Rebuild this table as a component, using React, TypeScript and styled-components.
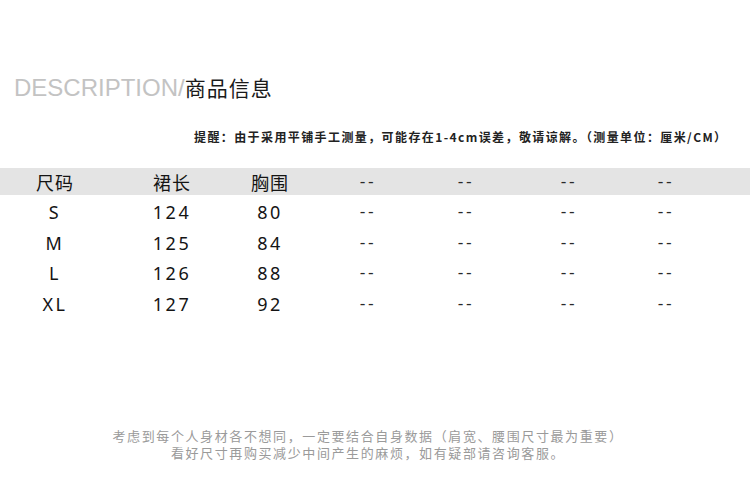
import styled, { createGlobalStyle } from "styled-components";

const GlobalStyle = createGlobalStyle`
  body {
    margin: 0;
    background: #ffffff;
    font-family: "Noto Sans", "Noto Sans CJK SC", sans-serif;
  }
`;

const Page = styled.div`
  width: 750px;
  height: 485px;
  overflow: hidden;
  display: flex;
  flex-direction: column;
`;

const Title = styled.h1`
  margin: 70px 0 0 14px;
  font-weight: normal;
  line-height: 34px;
  display: flex;
  align-items: baseline;
`;

const TitleEn = styled.span`
  font-family: "Liberation Sans", sans-serif;
  font-size: 24px;
  color: #c3c3c3;
`;

const TitleCn = styled.span`
  font-family: "Noto Sans CJK SC", sans-serif;
  font-size: 21px;
  color: #1a1a1a;
  letter-spacing: 1px;
`;

const Note = styled.p`
  margin: 24px 0 0 194px;
  font-family: "Noto Sans CJK SC", sans-serif;
  font-size: 12px;
  font-weight: bold;
  letter-spacing: 1.4px;
  line-height: 16px;
  color: #222;
  white-space: nowrap;
`;

const Table = styled.div`
  margin-top: 23px;
  display: flex;
  flex-direction: column;
`;

const Row = styled.div<{ $head?: boolean }>`
  display: grid;
  grid-template-columns: 110px 124px 72px 124px 72px 134px 60px;
  align-items: center;
  height: ${(p) => (p.$head ? "27px" : "30.5px")};
  background: ${(p) => (p.$head ? "#e4e4e4" : "transparent")};
  margin-bottom: ${(p) => (p.$head ? "2px" : "0")};
`;

const Cell = styled.div<{ $head?: boolean }>`
  text-align: center;
  font-family: ${(p) =>
    p.$head ? `"Noto Sans CJK SC", sans-serif` : `"Noto Sans", sans-serif`};
  font-size: 18px;
  line-height: 20px;
  letter-spacing: ${(p) => (p.$head ? "1px" : "2.5px")};
  color: #141414;
`;

const Dash = styled.div`
  text-align: center;
  font-family: "Liberation Sans", sans-serif;
  font-size: 17px;
  letter-spacing: 2.5px;
  color: #2a2a2a;
  line-height: 20px;
`;

const Footer = styled.div`
  margin-top: auto;
  margin-bottom: 24px;
  padding-right: 14px;
  text-align: center;
  font-family: "Noto Sans CJK SC", sans-serif;
  font-size: 13px;
  letter-spacing: 1.6px;
  line-height: 17px;
  color: #9a9a9a;
`;

const sizes = [
  ["S", "124", "80"],
  ["M", "125", "84"],
  ["L", "126", "88"],
  ["XL", "127", "92"],
];

const dashes = [0, 1, 2, 3];

export default function App() {
  return (
    <Page>
      <GlobalStyle />
      <Title>
        <TitleEn>DESCRIPTION/</TitleEn>
        <TitleCn>商品信息</TitleCn>
      </Title>
      <Note>
        提醒：由于采用平铺手工测量，可能存在1-4cm误差，敬请谅解。（测量单位：厘米/CM）
      </Note>
      <Table>
        <Row $head>
          <Cell $head>尺码</Cell>
          <Cell $head>裙长</Cell>
          <Cell $head>胸围</Cell>
          {dashes.map((d) => (
            <Dash key={d}>--</Dash>
          ))}
        </Row>
        {sizes.map((r) => (
          <Row key={r[0]}>
            {r.map((v, i) => (
              <Cell key={i}>{v}</Cell>
            ))}
            {dashes.map((d) => (
              <Dash key={d}>--</Dash>
            ))}
          </Row>
        ))}
      </Table>
      <Footer>
        考虑到每个人身材各不想同，一定要结合自身数据（肩宽、腰围尺寸最为重要）
        <br />
        看好尺寸再购买减少中间产生的麻烦，如有疑部请咨询客服。
      </Footer>
    </Page>
  );
}
